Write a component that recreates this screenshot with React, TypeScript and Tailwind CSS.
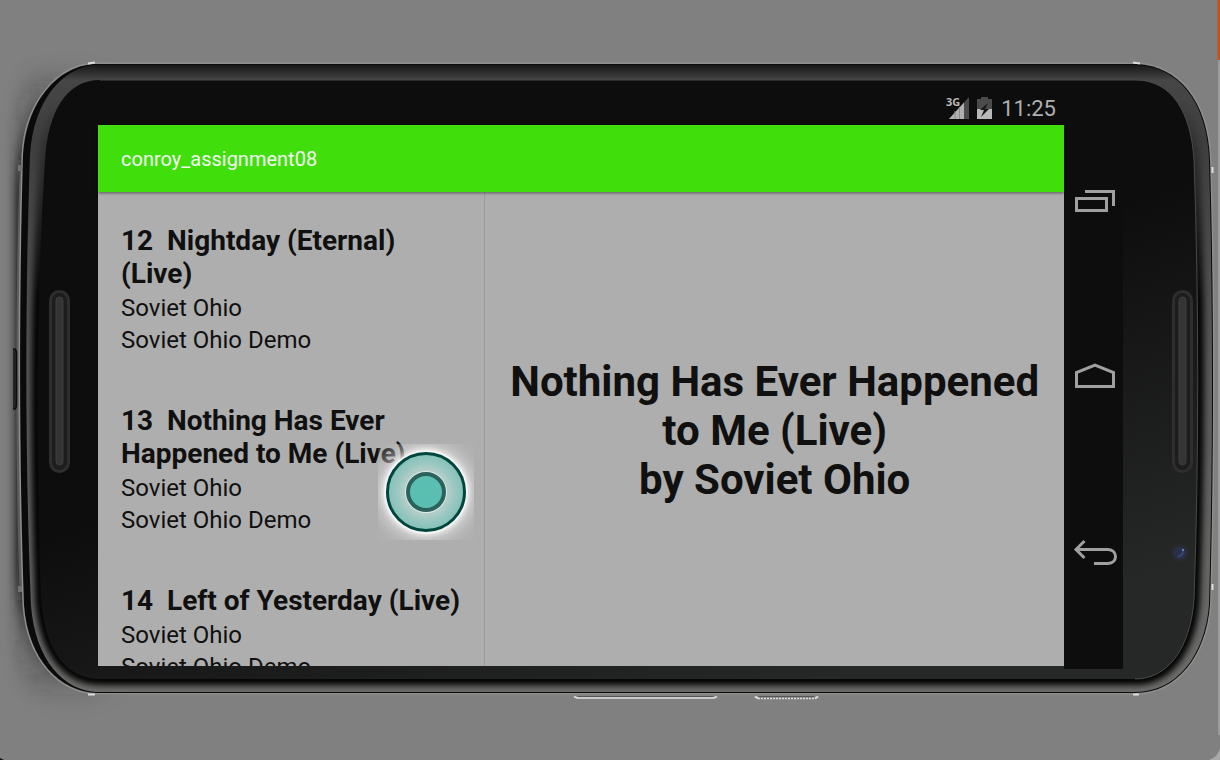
import { useState } from "react";

type Track = { number: number; title: string; artist: string; album: string };

const tracks: Track[] = [
  { number: 12, title: "Nightday (Eternal) (Live)", artist: "Soviet Ohio", album: "Soviet Ohio Demo" },
  { number: 13, title: "Nothing Has Ever Happened to Me (Live)", artist: "Soviet Ohio", album: "Soviet Ohio Demo" },
  { number: 14, title: "Left of Yesterday (Live)", artist: "Soviet Ohio", album: "Soviet Ohio Demo" },
];

const OUTER =
  "M97 64 H1137 C1178 66 1208 100 1210 160 C1214 300 1214 460 1210 605 C1206 655 1178 693 1135 693 H97 C60 692 28 660 24 605 C19 460 19 300 23 155 C26 100 60 64 97 64 Z";
const BEVEL =
  "M97 65 H1137 C1177 67 1207 100 1209 160 C1213 300 1213 460 1209 605 C1205 655 1177 692 1135 692 H97 C64 691 35 660 31 605 C25 460 25 300 30 155 C33 102 62 66 97 65 Z";
const GLASS =
  "M100 80 H1137 C1172 81 1191 112 1194 160 C1199 300 1199 460 1194 600 C1190 650 1167 679 1135 679 H100 C66 679 45 650 41 600 C36 460 36 300 45 160 C48 112 66 80 100 80 Z";

function Speaker({ x }: { x: number }) {
  return (
    <g>
      <rect x={x} y="290" width="21" height="183" rx="10.5" fill="#2e2e2e" />
      <rect x={x + 3} y="293" width="15" height="177" rx="7.5" fill="#1d1d1d" />
      <rect x={x + 7} y="297" width="7" height="168" rx="3.5" fill="#343434" stroke="#3f3f3f" />
    </g>
  );
}

function Device() {
  return (
    <svg aria-hidden="true" viewBox="0 0 1220 760" preserveAspectRatio="none" className="absolute inset-0 h-full w-full">
      <defs>
        <linearGradient id="glass" gradientUnits="userSpaceOnUse" x1="560" y1="60" x2="760" y2="700">
          <stop offset="0.45" stopColor="#0d0d0d" />
          <stop offset="1" stopColor="#262827" />
        </linearGradient>
        <linearGradient id="bevel" gradientUnits="userSpaceOnUse" x1="0" y1="64" x2="0" y2="693">
          <stop offset="0" stopColor="#151515" />
          <stop offset="0.026" stopColor="#464646" />
          <stop offset="0.12" stopColor="#3e3e3e" />
          <stop offset="0.5" stopColor="#5a5a5a" />
          <stop offset="1" stopColor="#6c6c6a" />
        </linearGradient>
        <linearGradient id="depth" gradientUnits="userSpaceOnUse" x1="0" y1="100" x2="0" y2="300">
          <stop offset="0" stopColor="#050505" stopOpacity="0" />
          <stop offset="1" stopColor="#050505" />
        </linearGradient>
        <filter id="soft" x="-20%" y="-20%" width="140%" height="140%"><feGaussianBlur stdDeviation="3" /></filter>
        <filter id="shade" x="-200%" y="-20%" width="500%" height="140%"><feGaussianBlur stdDeviation="5 20" /></filter>
        <filter id="wide" x="-300%" y="-40%" width="700%" height="180%"><feGaussianBlur stdDeviation="9 30" /></filter>
        <filter id="corner" x="-200%" y="-50%" width="500%" height="200%"><feGaussianBlur stdDeviation="20" /></filter>
        <clipPath id="bevelClip"><path d={BEVEL} /></clipPath>
      </defs>
      <path d="M1219 0 V60" stroke="#c0541c" strokeWidth="3" />
      <path d="M1219 60 V735" stroke="#9a9a9a" strokeWidth="2" />
      <path d="M1220 748 Q1218 757 1209 760 H1220 Z" fill="#a8a8a8" />
      <path d="M0 758 L4 760 H0 Z" fill="#1c1018" />
      <rect x="45" y="95" width="50" height="580" fill="#222" filter="url(#corner)" opacity="0.7" />
      <rect x="22" y="120" width="32" height="520" fill="#222" filter="url(#wide)" opacity="0.7" />
      <rect x="17" y="160" width="24" height="440" fill="#0c0c0c" filter="url(#shade)" opacity="0.9" />
      <path d="M22 170 C18 300 18 460 22 590" stroke="#5c5c5c" strokeWidth="5" fill="none" />
      <path d="M13 349 H15 Q16.500 350 16.500 353 V405 Q16.500 408 15 409 H13" stroke="#0c0c0c" strokeWidth="1.500" fill="#242424" />
      <path d={OUTER} fill="none" stroke="#8e8e8e" strokeWidth="3" />
      <path d={OUTER} fill="#0a0a0a" />
      <path d={BEVEL} fill="url(#bevel)" />
      <g clipPath="url(#bevelClip)">
        <path d={GLASS} fill="none" stroke="url(#depth)" strokeWidth="12" filter="url(#soft)" />
      </g>
      <path d={GLASS} fill="url(#glass)" />
      <path d="M100 80 H1137 C1172 81 1191 112 1194 160 C1199 300 1199 460 1194 600 C1190 650 1167 679 1135 679" fill="none" stroke="#4a4a4a" />
      <Speaker x={49} />
      <Speaker x={1172} />
      <circle cx="1180" cy="553" r="9" fill="#2a2a2c" />
      <circle cx="1180" cy="553" r="6.500" fill="#29304a" />
      <path d="M1178 556 Q1183 556 1183 551" fill="none" stroke="#35466e" strokeWidth="2" />
      <circle cx="1183" cy="550" r="1" fill="#6f9fce" />
      <path d="M88 63.500 L95 62.500 M1133 62.500 L1140 63.500 M88 694.500 H95 M1133 694.500 H1139" stroke="#dcdcdc" strokeWidth="2" />
      <path d="M1212.500 167 V173 M1212.500 584 V590" stroke="#dedede" strokeWidth="2" />
      <path d="M20 165 V171 M20 586 V592" stroke="#707070" strokeWidth="4" />
      <path d="M574 696.500 L577 698 H714 L717 696.500" stroke="#e2e2e2" strokeWidth="1.500" fill="none" />
      <path d="M578 696.500 H713 M759 696.500 H814" stroke="#555" />
      <path d="M755 696.500 L758 698.500" stroke="#e2e2e2" strokeWidth="2" />
      <path d="M758 698.500 H815" stroke="#dedede" strokeWidth="1.500" strokeDasharray="2 1" />
      <path d="M815 698.500 L818 696.500" stroke="#e2e2e2" strokeWidth="2" />
    </svg>
  );
}

function StatusBar() {
  return (
    <div className="flex h-8 shrink-0 items-center justify-end pr-2 text-[#b0b0b0]">
      <svg className="overflow-visible" width="24" height="24" viewBox="0 0 24 24" aria-label="3G signal" role="img">
        <path d="M23 0 V22 H3 Z" fill="#4b4b4b" />
        <path d="M18 5.500 V22 H3 Z" fill="#b0b0b0" />
        <path d="M9 14 V22 M13.500 10 V22" stroke="#8c8c8c" />
        <path d="M0 0 H13 V10 H0 Z" fill="#0d0d0d" />
        <text x="0" y="9" fontSize="11" fontWeight="700" fontFamily="'Open Sans', sans-serif" fill="#b8b8b8">3G</text>
      </svg>
      <svg className="ml-[7px]" width="15" height="24" viewBox="0 0 15 24" aria-label="Battery charging" role="img">
        <path d="M4 0 H11 V2 H15 V22 H0 V2 H4 Z" fill="#4b4b4b" />
        <path d="M0 12 H15 V22 H0 Z" fill="#b8b8b8" />
        <path d="M11 6 L3 13 H7 L4 20 L12 12 H8 Z" fill="#171717" />
      </svg>
      <time className="ml-[9px] text-[22px] leading-8">11:25</time>
    </div>
  );
}

function TrackList({ onSelect }: { onSelect: (t: Track) => void }) {
  return (
    <ul className="flex w-2/5 shrink-0 flex-col gap-12 overflow-y-auto pt-8 pr-5 pl-[23px] [scrollbar-width:none]">
      {tracks.map((t) => (
        <li key={t.number} className="shrink-0">
          <button type="button" onClick={() => onSelect(t)} className="block w-full text-left text-2xl leading-8">
            <span className="block pb-[2px] text-[28px] leading-[33px] font-bold whitespace-pre-wrap">{`${t.number}\u00a0 ${t.title}`}</span>
            <span className="block">{t.artist}</span>
            <span className="block">{t.album}</span>
          </button>
        </li>
      ))}
    </ul>
  );
}

function NavBar() {
  return (
    <nav className="flex w-[59px] shrink-0 flex-col items-center justify-around bg-[#0d0d0d] pt-5 pb-7 pl-[2px]">
      <button type="button" aria-label="Recent apps">
        <svg width="44" height="28" viewBox="0 0 44 28" fill="none" stroke="#a0a0a0" strokeWidth="3">
          <path d="M3.500 11.500 H33.500 V23.500 H3.500 Z" />
          <path d="M12 4.500 H40.500 V19" />
        </svg>
      </button>
      <button type="button" aria-label="Home">
        <svg width="44" height="28" viewBox="0 0 44 28" fill="none" stroke="#a0a0a0" strokeWidth="3">
          <path d="M3.500 23.500 V9.500 L22 2 L40.500 9.500 V23.500 Z" />
        </svg>
      </button>
      <button type="button" aria-label="Back">
        <svg width="44" height="28" viewBox="0 0 44 28" fill="none" stroke="#a0a0a0" strokeWidth="3">
          <path d="M2 10.500 H35 C45 11 45 24 35 24.500 H21" />
          <path d="M11.500 2 L3 10.500 L11.500 19" />
        </svg>
      </button>
    </nav>
  );
}

function TouchPoint() {
  return (
    <div aria-hidden="true" className="pointer-events-none absolute top-[351px] left-[280px]">
      <svg width="96" height="96" viewBox="0 0 96 96">
        <defs>
          <radialGradient id="halo" gradientUnits="userSpaceOnUse" cx="48" cy="48" r="62">
            <stop offset="0.66" stopColor="#fff" stopOpacity="0.8" />
            <stop offset="0.76" stopColor="#dcdcdc" stopOpacity="0.5" />
            <stop offset="0.9" stopColor="#c4c4c4" stopOpacity="0.3" />
            <stop offset="1" stopColor="#b8b8b8" stopOpacity="0.2" />
          </radialGradient>
          <radialGradient id="disc" gradientUnits="userSpaceOnUse" cx="48" cy="48" r="40">
            <stop offset="0.5" stopColor="#bccfcb" />
            <stop offset="0.7" stopColor="#9cc8c1" />
            <stop offset="1" stopColor="#7fc0b7" />
          </radialGradient>
        </defs>
        <rect width="96" height="96" fill="url(#halo)" />
        <circle cx="48" cy="48" r="42" fill="#f4f4f4" />
        <circle cx="48" cy="48" r="38.500" fill="url(#disc)" stroke="#00463e" strokeWidth="3" />
        <circle cx="48" cy="48" r="21" fill="#dcebe8" />
        <circle cx="48" cy="48" r="18" fill="#5abfb1" stroke="#2b625b" strokeWidth="4" />
      </svg>
    </div>
  );
}

export default function App() {
  const [selected, setSelected] = useState(tracks[1]);
  return (
    <main className="relative h-screen overflow-hidden bg-[#808080] pt-[93px] pr-[97px] pb-[91px] pl-[98px] font-['Roboto',sans-serif] text-[#101010]">
      <Device />
      <div className="relative flex h-full">
        <div className="relative mb-[3px] flex min-w-0 flex-1 flex-col">
          <StatusBar />
          <header className="z-10 flex h-[67px] shrink-0 items-center bg-[#40df0c] px-[23px] shadow-[0_1px_3px_rgba(0,0,0,0.5)]">
            <h1 className="text-xl text-[#f4f4f4]">conroy_assignment08</h1>
          </header>
          <div className="flex min-h-0 flex-1 bg-[#aeaeae]">
            <TrackList onSelect={setSelected} />
            <section className="flex min-w-0 flex-1 items-center justify-center border-l border-[#9c9c9c] px-5 pt-[2px] text-center">
              <h2 className="text-[42px] leading-[49px] font-bold">
                {selected.title}
                <br />
                by {selected.artist}
              </h2>
            </section>
          </div>
          <TouchPoint />
        </div>
        <NavBar />
      </div>
    </main>
  );
}
